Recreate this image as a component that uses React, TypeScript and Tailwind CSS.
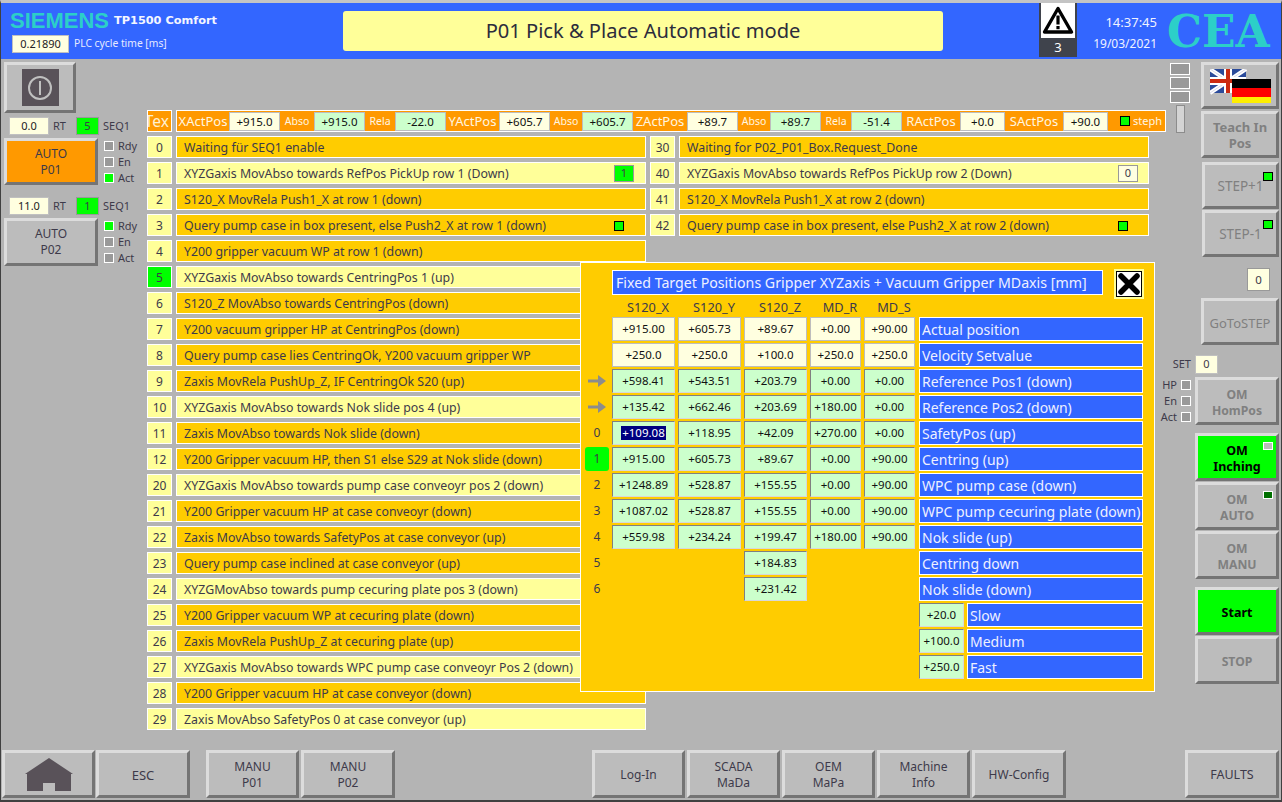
import React from "react";

const T = "text-[#3d3a4a]";

function Btn({ className = "", children, bg = "bg-[#bcbcbc]", pt = "pt-[2px]" }: { className?: string; children?: React.ReactNode; bg?: string; pt?: string }) {
  return (
    <div className={`flex shrink-0 flex-col items-center justify-center border-[3px] border-t-[#dcdcdc] border-l-[#dcdcdc] border-r-[#747474] border-b-[#747474] leading-[16px] ${pt} ${bg} ${className}`}>
      {children}
    </div>
  );
}

function Led({ on = false, className = "" }: { on?: boolean; className?: string }) {
  return <div className={`h-[10px] w-[10px] shrink-0 border border-white ${on ? "bg-[#00ff00]" : "bg-[#999999]"} ${className}`} />;
}

function BlackLed({ className = "" }: { className?: string }) {
  return <div className={`h-[10px] w-[10px] shrink-0 border border-black bg-[#00ff00] ${className}`} />;
}

function LedList({ items }: { items: [string, boolean][] }) {
  return (
    <div className="mt-[3px] flex flex-col gap-[6px]">
      {items.map(([l, on]) => (
        <div key={l} className={`flex h-[10px] items-center gap-[4px] text-[11px] ${T}`}>
          <Led on={on} />
          <span>{l}</span>
        </div>
      ))}
    </div>
  );
}

function SeqRow({ v, s, mt }: { v: string; s: string; mt: string }) {
  return (
    <div className={`flex h-[18px] items-center text-[11px] ${T} ${mt}`}>
      <div className="ml-[5px] flex h-[18px] w-[40px] items-center justify-center border border-[#c0c0c0] bg-[#ffffe0] text-[#222]">{v}</div>
      <span className="ml-[4px] w-[23px]">RT</span>
      <div className="flex h-[18px] w-[23px] items-center justify-center border border-[#999] bg-[#00ff00]">{s}</div>
      <span className="ml-[4px]">SEQ1</span>
    </div>
  );
}

function StatVal({ v, w = "w-[51px]", green = false }: { v: string; w?: string; green?: boolean }) {
  return (
    <div className={`flex h-[19px] shrink-0 items-center justify-center border border-[#bdbdbd] pt-[1px] text-[11.5px] text-[#111] ${w} ${green ? "bg-[#ccffcc]" : "bg-[#ffffe0]"}`}>{v}</div>
  );
}

function StatLabel({ t, w, big = true }: { t: string; w: string; big?: boolean }) {
  return <div className={`shrink-0 pt-[2px] text-center text-[#fff6e0] ${big ? "text-[13px]" : "text-[10.5px]"} ${w}`}>{t}</div>;
}

function Row({ n, text, light = false, active = false, right }: { n: string; text: string; light?: boolean; active?: boolean; right?: React.ReactNode }) {
  return (
    <div className="flex h-[22px] gap-[4px]">
      <div className={`flex w-[25px] shrink-0 items-center justify-center border border-white pt-[2px] text-[12px] ${T} ${active ? "bg-[#00ff00]" : "bg-[#ffff99]"}`}>{n}</div>
      <div className={`flex w-[470px] shrink-0 items-center justify-between border border-white pl-[7px] pr-[11px] pt-[2px] text-[12.35px] ${T} ${light ? "bg-[#ffff99]" : "bg-[#ffcc00]"}`}>
        <span>{text}</span>
        {right}
      </div>
    </div>
  );
}

function Cell({ v, kind = "g", w = "w-[63px]", sel = false }: { v?: string; kind?: "g" | "i" | "n"; w?: string; sel?: boolean }) {
  if (kind === "n") return <div className={`h-[24px] shrink-0 ${w}`} />;
  const cls =
    kind === "i"
      ? "border border-[#bdbdbd] bg-[#ffffe0]"
      : "border border-t-[#808080] border-l-[#808080] border-r-[#d8d8d8] border-b-[#d8d8d8] bg-[#ccffcc]";
  return (
    <div className={`flex h-[24px] shrink-0 items-center justify-center text-[11.5px] text-[#111] ${w} ${cls}`}>
      {sel ? <span className="bg-[#000080] px-[1px] leading-[14px] text-white">{v}</span> : v}
    </div>
  );
}

function Label({ t, w = "w-[224px]" }: { t: string; w?: string }) {
  return <div className={`flex h-[24px] shrink-0 items-center whitespace-nowrap border border-white bg-[#3366ff] pl-[2px] pt-[1px] text-[14px] text-[#eef0ff] ${w}`}>{t}</div>;
}

function Arrow() {
  return (
    <svg width="18" height="12" viewBox="0 0 18 12" className="block">
      <path d="M0 4.5h10V0l8 6-8 6V7.5H0z" fill="#8c8c8c" />
    </svg>
  );
}

const tableRows: { idx: React.ReactNode; active?: boolean; kind?: "g" | "i"; vals: (string | null)[]; label: string; sel?: boolean }[] = [
  { idx: null, kind: "i", vals: ["+915.00", "+605.73", "+89.67", "+0.00", "+90.00"], label: "Actual position" },
  { idx: null, kind: "i", vals: ["+250.0", "+250.0", "+100.0", "+250.0", "+250.0"], label: "Velocity Setvalue" },
  { idx: <Arrow />, vals: ["+598.41", "+543.51", "+203.79", "+0.00", "+0.00"], label: "Reference Pos1 (down)" },
  { idx: <Arrow />, vals: ["+135.42", "+662.46", "+203.69", "+180.00", "+0.00"], label: "Reference Pos2 (down)" },
  { idx: "0", sel: true, vals: ["+109.08", "+118.95", "+42.09", "+270.00", "+0.00"], label: "SafetyPos (up)" },
  { idx: "1", active: true, vals: ["+915.00", "+605.73", "+89.67", "+0.00", "+90.00"], label: "Centring (up)" },
  { idx: "2", vals: ["+1248.89", "+528.87", "+155.55", "+0.00", "+90.00"], label: "WPC pump case (down)" },
  { idx: "3", vals: ["+1087.02", "+528.87", "+155.55", "+0.00", "+90.00"], label: "WPC pump cecuring plate (down)" },
  { idx: "4", vals: ["+559.98", "+234.24", "+199.47", "+180.00", "+90.00"], label: "Nok slide (up)" },
  { idx: "5", vals: [null, null, "+184.83", null, null], label: "Centring down" },
  { idx: "6", vals: [null, null, "+231.42", null, null], label: "Nok slide (down)" },
];

const cw = ["w-[63px]", "w-[63px]", "w-[63px]", "w-[51px]", "w-[51px]"];

function Popup() {
  return (
    <div className="absolute left-[433px] top-[203px] h-[430px] w-[575px] border border-white bg-[#ffcc00] pt-[7px]">
      <div className="ml-[31px] flex items-start">
        <div className="flex h-[25px] w-[491px] items-center border border-white bg-[#3366ff] pl-[3px] text-[14.2px] text-[#eef0ff]">
          Fixed Target Positions Gripper XYZaxis + Vacuum Gripper MDaxis [mm]
        </div>
        <div className="ml-[11px] -mt-[1px] border-2 border-[#ffff99]">
          <div className="flex h-[26px] w-[26px] items-center justify-center border border-black bg-white">
            <svg width="22" height="22" viewBox="0 0 22 22">
              <path d="M3 3l16 16M19 3L3 19" stroke="#000" strokeWidth="5.5" strokeLinecap="round" />
            </svg>
          </div>
        </div>
      </div>
      <div className={`ml-[31px] mt-[1px] flex h-[17px] items-center gap-[3px] pb-[2px] text-[12.8px] ${T}`}>
        {["S120_X", "S120_Y", "S120_Z", "MD_R", "MD_S"].map((h, i) => (
          <div key={h} className={`pl-[9px] text-center ${cw[i]}`}>{h}</div>
        ))}
      </div>
      <div className="flex flex-col gap-[2px]">
        {tableRows.map((r) => (
          <div key={r.label} className="flex h-[24px] gap-[3px]">
            <div className="flex w-[28px] items-center justify-center pl-[4px]">
              {r.active ? (
                <div className={`flex h-[24px] w-[24px] items-center justify-center rounded-[3px] bg-[#00ff00] text-[12px] ${T}`}>{r.idx}</div>
              ) : (
                <span className={`text-[12px] ${T}`}>{r.idx}</span>
              )}
            </div>
            {r.vals.map((v, i) => (
              <Cell key={i} v={v ?? undefined} kind={v === null ? "n" : r.kind ?? "g"} w={cw[i]} sel={r.sel && i === 0} />
            ))}
            <div className="ml-[1px]">
              <Label t={r.label} />
            </div>
          </div>
        ))}
        {[
          ["+20.0", "Slow"],
          ["+100.0", "Medium"],
          ["+250.0", "Fast"],
        ].map(([v, l]) => (
          <div key={l} className="ml-[338px] flex gap-[3px]">
            <Cell v={v} w="w-[45px]" />
            <Label t={l} w="w-[176px]" />
          </div>
        ))}
      </div>
    </div>
  );
}

function Flags() {
  return (
    <svg width="61" height="35" viewBox="0 0 61 35" className="ml-[1px]">
      <rect x="0" y="0" width="36" height="24" fill="#2a4a9a" />
      <path d="M0 0l36 24M36 0L0 24" stroke="#fff" strokeWidth="4" />
      <path d="M0 0l36 24M36 0L0 24" stroke="#d8d8e8" strokeWidth="1" />
      <path d="M18 0v24M0 12h36" stroke="#fff" strokeWidth="8" />
      <path d="M18 0v24M0 12h36" stroke="#cc2a10" strokeWidth="4" />
      <rect x="22" y="10" width="39" height="9" fill="#000" />
      <rect x="22" y="19" width="39" height="9" fill="#ff0000" />
      <rect x="22" y="28" width="39" height="6" fill="#ffee00" />
    </svg>
  );
}

const grey = "text-[12.2px] font-bold text-[#808080]";
const low = "pt-[4px]";

const leftRows: [string, string, boolean?, boolean?][] = [
  ["0", "Waiting für SEQ1 enable"],
  ["1", "XYZGaxis MovAbso towards RefPos PickUp row 1 (Down)", true],
  ["2", "S120_X MovRela Push1_X at row 1 (down)"],
  ["3", "Query pump case in box present, else Push2_X at row 1 (down)"],
  ["4", "Y200 gripper vacuum WP at row 1 (down)"],
  ["5", "XYZGaxis MovAbso towards CentringPos 1 (up)", true, true],
  ["6", "S120_Z MovAbso towards CentringPos (down)"],
  ["7", "Y200 vacuum gripper HP at CentringPos (down)"],
  ["8", "Query pump case lies CentringOk, Y200 vacuum gripper WP"],
  ["9", "Zaxis MovRela PushUp_Z, IF CentringOk S20 (up)"],
  ["10", "XYZGaxis MovAbso towards Nok slide pos 4 (up)", true],
  ["11", "Zaxis MovAbso towards Nok slide (down)"],
  ["12", "Y200 Gripper vacuum HP, then S1 else S29 at Nok slide (down)"],
  ["20", "XYZGaxis MovAbso towards pump case conveoyr pos 2 (down)", true],
  ["21", "Y200 Gripper vacuum HP at case conveoyr (down)"],
  ["22", "Zaxis MovAbso towards SafetyPos at case conveyor (up)"],
  ["23", "Query pump case inclined at case conveyor (up)"],
  ["24", "XYZGMovAbso towards pump cecuring plate pos 3 (down)", true],
  ["25", "Y200 Gripper vacuum WP at cecuring plate (down)"],
  ["26", "Zaxis MovRela PushUp_Z at cecuring plate (up)"],
  ["27", "XYZGaxis MovAbso towards WPC pump case conveoyr Pos 2 (down)", true],
  ["28", "Y200 Gripper vacuum HP at case conveyor (down)"],
  ["29", "Zaxis MovAbso SafetyPos 0 at case conveyor (up)", true],
];

function rowRight(n: string) {
  if (n === "1")
    return <div className="-mt-[2px] flex h-[17px] w-[20px] items-center justify-center border border-[#999] bg-[#00ff00] text-[11px]">1</div>;
  if (n === "3") return <div className="-mt-[1px] mr-[10px]"><BlackLed /></div>;
  return null;
}

export default function App() {
  return (
    <div className="flex h-[802px] w-[1282px] flex-col overflow-hidden border-x border-b-2 border-[#404040] border-t-[3px] border-t-[#c4c4c4] bg-[#b4b4b4] font-['Noto_Sans',sans-serif]">
      {/* header */}
      <header className="flex h-[56px] shrink-0 items-start bg-[#3366ff]">
        <div className="w-[342px] shrink-0 pl-[9px] pt-[7px]">
          <div className="flex h-[22px] items-center">
            <span className="font-['Liberation_Sans',sans-serif] text-[22px] font-bold leading-none text-[#2ccfc8]">SIEMENS</span>
            <span className="ml-[5px] font-['DejaVu_Sans',sans-serif] text-[11.3px] font-bold text-[#f4f6ff]">TP1500 Comfort</span>
          </div>
          <div className="mt-[3px] flex items-center">
            <div className="ml-[2px] flex h-[18px] w-[57px] items-center justify-center border border-[#c0c0c0] bg-[#ffffe0] text-[11px] text-[#222]">0.21890</div>
            <span className="ml-[5px] text-[10.3px] text-[#e6eaff]">PLC cycle time [ms]</span>
          </div>
        </div>
        <div className="mt-[8px] flex h-[40px] w-[600px] shrink-0 items-center justify-center rounded-[3px] bg-[#ffff99] text-[20.1px] text-[#2c2c3c]">
          P01 Pick &amp; Place Automatic mode
        </div>
        <div className="ml-[96px] flex h-[55px] w-[38px] shrink-0 flex-col bg-[#3f434c] px-[2px] -mt-[1px] pt-[1px]">
          <div className="flex h-[38px] items-center justify-center bg-white">
            <svg width="32" height="32" viewBox="0 0 32 32">
              <path d="M16 4.5L29.5 28H2.5Z" fill="none" stroke="#000" strokeWidth="3.4" strokeLinejoin="round" />
              <path d="M16 11.5v9" stroke="#000" strokeWidth="3.2" />
              <rect x="14.4" y="22" width="3.2" height="3.2" fill="#000" />
            </svg>
          </div>
          <div className="flex flex-1 items-center justify-center text-[13px] text-white">3</div>
        </div>
        <div className="w-[80px] shrink-0 pt-[9px] text-right text-[12px] leading-[21px] text-[#f0f2ff]">
          <div className="text-[13px]">14:37:45</div>
          <div>19/03/2021</div>
        </div>
        <div className="ml-[10px] mt-[4px] font-['DejaVu_Serif',serif] text-[44px] font-bold leading-[50px] text-[#2ccfc8]">CEA</div>
      </header>

      {/* main */}
      <div className="flex h-[691px] shrink-0">
        {/* left */}
        <aside className="w-[146px] shrink-0 pl-[3px] pt-[3px]">
          <Btn pt="pt-0" className="h-[51px] w-[72px]">
            <div className="flex h-[37px] w-[37px] items-center justify-center bg-[#595259]">
              <svg width="26" height="26" viewBox="0 0 26 26">
                <circle cx="13" cy="13" r="11" fill="none" stroke="#c0c0c0" strokeWidth="2" />
                <path d="M13 6v14" stroke="#c0c0c0" strokeWidth="2" />
              </svg>
            </div>
          </Btn>
          <SeqRow v="0.0" s="5" mt="mt-[4px]" />
          <div className="mt-[3px] flex gap-[6px]">
            <Btn pt="pt-0" bg="bg-[#ff9900]" className={`h-[47px] w-[94px] text-[12px] ${T}`}>
              <span>AUTO</span>
              <span>P01</span>
            </Btn>
            <LedList items={[["Rdy", false], ["En", false], ["Act", true]]} />
          </div>
          <SeqRow v="11.0" s="1" mt="mt-[12px]" />
          <div className="mt-[3px] flex gap-[6px]">
            <Btn pt="pt-0" className={`h-[48px] w-[94px] text-[12px] ${T}`}>
              <span>AUTO</span>
              <span>P02</span>
            </Btn>
            <LedList items={[["Rdy", true], ["En", false], ["Act", false]]} />
          </div>
        </aside>

        {/* center */}
        <main className="relative w-[1021px] shrink-0 pt-[51px]">
          <div className="flex h-[22px] gap-[4px]">
            <div className="flex w-[25px] shrink-0 items-center justify-end overflow-hidden border border-white bg-[#ff9900] pr-[2px] pt-[2px] text-[15.5px] text-[#fff0d0]">
              <span className="shrink-0">Tex</span>
            </div>
            <div className="flex w-[990px] shrink-0 items-center whitespace-nowrap border border-white bg-[#ff9900]">
              <StatLabel t="XActPos" w="w-[52px]" />
              <StatVal v="+915.0" />
              <StatLabel t="Abso" w="w-[34px]" big={false} />
              <StatVal v="+915.0" green />
              <StatLabel t="Rela" w="w-[30px]" big={false} />
              <StatVal v="-22.0" green />
              <StatLabel t="YActPos" w="w-[53px]" />
              <StatVal v="+605.7" />
              <StatLabel t="Abso" w="w-[32px]" big={false} />
              <StatVal v="+605.7" green />
              <StatLabel t="ZActPos" w="w-[54px]" />
              <StatVal v="+89.7" />
              <StatLabel t="Abso" w="w-[32px]" big={false} />
              <StatVal v="+89.7" green />
              <StatLabel t="Rela" w="w-[30px]" big={false} />
              <StatVal v="-51.4" green />
              <StatLabel t="RActPos" w="w-[58px]" />
              <StatVal v="+0.0" w="w-[45px]" />
              <StatLabel t="SActPos" w="w-[58px]" />
              <StatVal v="+90.0" w="w-[45px]" />
              <BlackLed className="ml-[12px]" />
              <span className="ml-[3px] pt-[1px] text-[11px] text-[#fff6e0]">steph</span>
            </div>
          </div>
          <div className="mt-[4px] flex gap-[4px]">
            <div className="flex flex-col gap-[4px]">
              {leftRows.map(([n, t, l, a]) => (
                <Row key={n} n={n} text={t} light={l} active={a} right={rowRight(n)} />
              ))}
            </div>
            <div className="flex flex-col gap-[4px]">
              <Row n="30" text="Waiting for P02_P01_Box.Request_Done" />
              <Row
                n="40"
                text="XYZGaxis MovAbso towards RefPos PickUp row 2 (Down)"
                light
                right={<div className={`-mr-[1px] -mt-[2px] flex h-[17px] w-[20px] items-center justify-center border border-[#999] bg-[#ffffe0] text-[11px] ${T}`}>0</div>}
              />
              <Row n="41" text="S120_X MovRela Push1_X at row 2 (down)" />
              <Row n="42" text="Query pump case in box present, else Push2_X at row 2 (down)" right={<div className="-mt-[1px] mr-[9px]"><BlackLed /></div>} />
            </div>
          </div>
          <Popup />
        </main>

        {/* right */}
        <aside className="w-[113px] shrink-0">
          <div className="flex">
            <div className="w-[33px] shrink-0 pl-[2px] pt-[4px]">
              <div className="flex flex-col gap-[2px]">
                <div className="h-[12px] w-[20px] border border-white bg-[#999999]" />
                <div className="h-[12px] w-[20px] border border-white bg-[#999999]" />
                <div className="h-[12px] w-[20px] border border-white bg-[#999999]" />
              </div>
              <div className="ml-[6px] mt-[2px] h-[28px] w-[9px] border border-[#8c8c8c] bg-[#d4d4d4]" />
            </div>
            <div className="flex flex-col pt-[3px]">
              <Btn className="h-[47px] w-[78px]">
                <Flags />
              </Btn>
              <Btn pt="pt-0" className="mt-[2px] h-[47px] w-[78px] text-[13px] font-bold text-[#808080]">
                <span>Teach In</span>
                <span>Pos</span>
              </Btn>
              <Btn pt="pt-0" className="relative ml-[1px] mt-[4px] h-[47px] w-[77px] text-[13.5px] text-[#808080]">
                <span>STEP+1</span>
                <div className="absolute right-[3px] top-[7px] h-[9px] w-[10px] border border-black bg-[#00ff00]" />
              </Btn>
              <Btn pt="pt-0" className="relative ml-[1px] mt-[1px] h-[47px] w-[77px] text-[13.5px] text-[#808080]">
                <span>STEP-1</span>
                <div className="absolute right-[3px] top-[7px] h-[9px] w-[10px] border border-black bg-[#00ff00]" />
              </Btn>
              <div className={`ml-[46px] mt-[11px] flex h-[23px] w-[23px] items-center justify-center border border-[#999] bg-[#ffffe0] text-[11.5px] ${T}`}>0</div>
              <Btn className="mt-[7px] h-[47px] w-[78px] text-[13px] text-[#808080]">GoToSTEP</Btn>
            </div>
          </div>
          <div className="mt-[10px] flex">
            <div className={`flex w-[27px] shrink-0 flex-col items-end pr-[4px] text-[11px] ${T}`}>
              <div className="flex h-[19px] items-center justify-end whitespace-nowrap">SET</div>
              <div className="mt-[6px] flex flex-col items-end gap-[6px]">
                {["HP", "En", "Act"].map((l) => (
                  <div key={l} className="flex h-[10px] items-center justify-end gap-[4px] whitespace-nowrap">
                    <span>{l}</span>
                    <Led />
                  </div>
                ))}
              </div>
            </div>
            <div className="flex w-[84px] shrink-0 flex-col">
              <div className={`flex h-[19px] w-[23px] items-center justify-center border border-[#c0c0c0] bg-[#ffffe0] text-[11px] ${T}`}>0</div>
              <Btn pt={low} className={`mt-[3px] h-[48px] w-[84px] ${grey}`}>
                <span>OM</span>
                <span>HomPos</span>
              </Btn>
              <Btn pt={low} bg="bg-[#00ff00]" className="relative mt-[8px] h-[48px] w-[84px] text-[12.5px] font-bold text-black">
                <span>OM</span>
                <span>Inching</span>
                <div className="absolute right-[3px] top-[6px] h-[8px] w-[10px] border border-white bg-[#bcbcbc]" />
              </Btn>
              <Btn pt={low} className={`relative mt-[1px] h-[48px] w-[84px] ${grey}`}>
                <span>OM</span>
                <span>AUTO</span>
                <div className="absolute right-[3px] top-[6px] h-[8px] w-[10px] border border-white bg-[#007000]" />
              </Btn>
              <Btn pt={low} className={`mt-[1px] h-[48px] w-[84px] ${grey}`}>
                <span>OM</span>
                <span>MANU</span>
              </Btn>
              <Btn pt={low} bg="bg-[#00ff00]" className="mt-[8px] h-[48px] w-[84px] text-[12.5px] font-bold text-black">Start</Btn>
              <Btn pt={low} className={`mt-[1px] h-[48px] w-[84px] ${grey}`}>STOP</Btn>
            </div>
          </div>
        </aside>
      </div>

      {/* bottom */}
      <footer className={`flex h-[48px] shrink-0 text-[12px] ${T}`}>
        <Btn pt="pt-0" className="ml-[1px] h-[48px] w-[93px]">
          <svg width="50" height="33" viewBox="0 0 50 33">
            <path d="M25 0L49 16H1Z" fill="#595259" />
            <path d="M3 16h44v17H31V25H19v8H3z" fill="#595259" />
          </svg>
        </Btn>
        <Btn className="ml-[1px] h-[48px] w-[94px] text-[13px]">ESC</Btn>
        <Btn className="ml-[16px] h-[48px] w-[93px]"><span>MANU</span><span>P01</span></Btn>
        <Btn className="ml-[2px] h-[48px] w-[94px]"><span>MANU</span><span>P02</span></Btn>
        <Btn className="ml-[197px] h-[48px] w-[93px]">Log-In</Btn>
        <Btn className="ml-[2px] h-[48px] w-[93px]"><span>SCADA</span><span>MaDa</span></Btn>
        <Btn className="ml-[2px] h-[48px] w-[93px]"><span>OEM</span><span>MaPa</span></Btn>
        <Btn className="ml-[2px] h-[48px] w-[93px]"><span>Machine</span><span>Info</span></Btn>
        <Btn className="ml-[2px] h-[48px] w-[94px]">HW-Config</Btn>
        <Btn className="ml-[119px] h-[48px] w-[94px] text-[12.5px]">FAULTS</Btn>
      </footer>
    </div>
  );
}
